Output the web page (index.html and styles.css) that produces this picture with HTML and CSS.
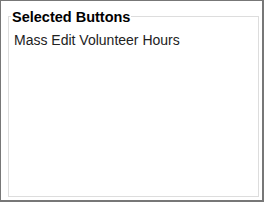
FILE: index.html
```html
<!DOCTYPE html>
<html lang="en">
<head>
  <meta charset="UTF-8">
  <title>Selected Buttons</title>
  <link rel="stylesheet" href="styles.css">
</head>
<body>

  <div class="panel">
    <fieldset class="button-group">
      <legend>Selected Buttons</legend>
      <div class="button-item">Mass Edit Volunteer Hours</div>
    </fieldset>
  </div>

</body>
</html>
```

FILE: styles.css
```css
    html, body {
      margin: 0;
      padding: 0;
      background: white;
    }

    body {
      font-family: "Liberation Sans", Arial, sans-serif;
    }

    .panel {
      box-sizing: border-box;
      width: 264px;
      height: 202px;
      border: 1px solid #777;
      border-right-width: 2px;
      border-bottom-width: 2px;
      padding: 5px 3px 3px 7px;
    }

    .button-group {
      box-sizing: border-box;
      height: 100%;
      margin: 0;
      padding: 6px 6px 0 5px;
      border: 1px solid #ddd;
    }

    .button-group legend {
      padding: 3px 1px 1px;
      margin-left: -3px;
      font-size: 14.5px;
      line-height: 16px;
      font-weight: bold;
      color: #000;
    }

    .button-item {
      font-size: 14px;
      color: #222;
    }
```
